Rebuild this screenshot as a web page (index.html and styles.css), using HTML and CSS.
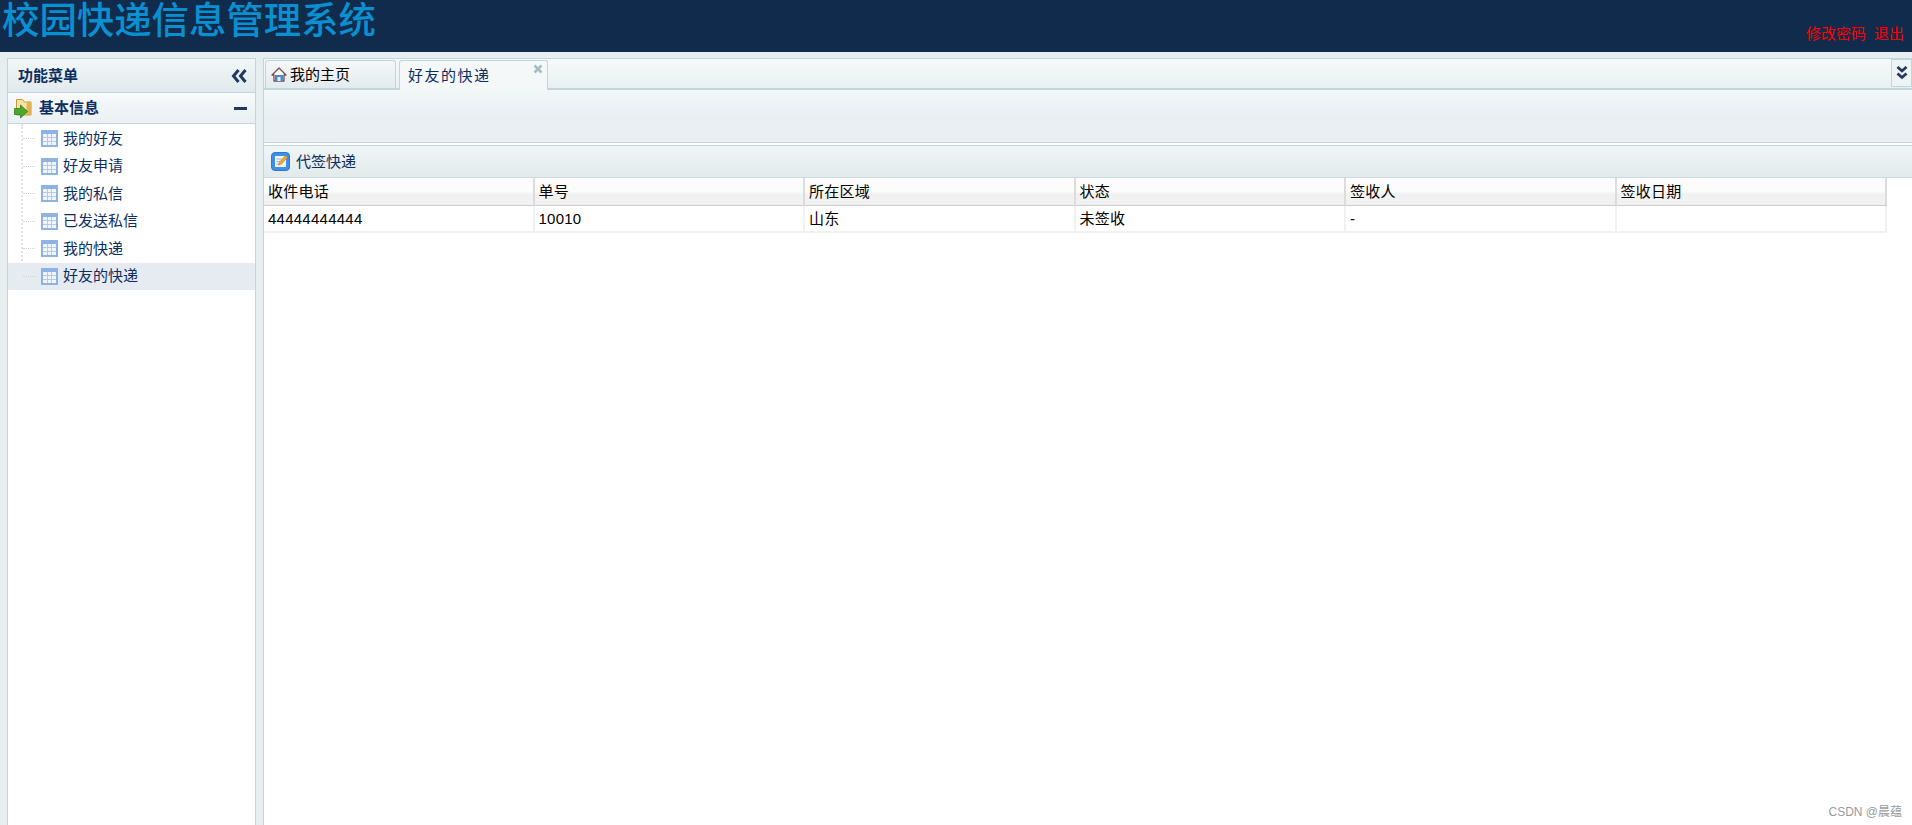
FILE: index.html
```html
<!DOCTYPE html>
<html lang="zh-CN">
<head>
<meta charset="utf-8">
<title>校园快递信息管理系统</title>
<link rel="stylesheet" href="styles.css">
</head>
<body>
<svg class="defs" width="0" height="0" aria-hidden="true">
  <symbol id="grid" viewBox="0 0 17 17">
    <rect x="0" y="0" width="17" height="17" fill="#8db3e6"/>
    <rect x="2" y="4" width="13" height="11" fill="#f2f6fc"/>
    <path d="M2 7.500h13M2 11.500h13M6.500 4v11M10.500 4v11" stroke="#b4cbe8" stroke-width="1"/>
  </symbol>
</svg>
<header class="top">
  <h1 class="brand">校园快递信息管理系统</h1>
  <div class="user-links"><a>修改密码</a><a>退出</a></div>
</header>
<main class="shell">
  <aside class="side">
    <div class="side-head">
      <span>功能菜单</span>
      <svg class="chev" width="16" height="14" viewBox="0 0 16 14"><path d="M7.500 1 2.500 7l5 6M14.500 1 9.500 7l5 6" fill="none" stroke="#20395f" stroke-width="3"/></svg>
    </div>
    <div class="acc-head">
      <svg class="folder" width="19" height="21" viewBox="0 0 19 21">
        <path d="M2.500 1.500h6l2 2.500h6.500v13H2.500z" fill="#f6e3a2" stroke="#c29a3c"/>
        <path d="M13 4h4v13h-5z" fill="#e4b350"/>
        <path d="M.5 10.500h6V7l7 6.500-7 6.500v-3.500h-6z" fill="#4aa92c" stroke="#2f7d1c" stroke-width=".8"/>
      </svg>
      <span class="acc-title">基本信息</span>
      <i class="minus"></i>
    </div>
    <ul class="tree">
      <li class="node"><svg class="ico"><use href="#grid"/></svg>我的好友</li>
      <li class="node"><svg class="ico"><use href="#grid"/></svg>好友申请</li>
      <li class="node"><svg class="ico"><use href="#grid"/></svg>我的私信</li>
      <li class="node"><svg class="ico"><use href="#grid"/></svg>已发送私信</li>
      <li class="node"><svg class="ico"><use href="#grid"/></svg>我的快递</li>
      <li class="node on"><svg class="ico"><use href="#grid"/></svg>好友的快递</li>
    </ul>
  </aside>
  <section class="work">
    <nav class="tabs">
      <div class="tab home">
        <svg width="16" height="15" viewBox="0 0 16 15">
          <path d="M8 1 1 8h2v6h10V8h2z" fill="#fff" stroke="#7b4a4a" stroke-width="1.300" stroke-linejoin="round"/>
          <path d="M4 8h8v6H4z" fill="#4d86c9"/><path d="M6.500 10h3v4h-3z" fill="#eaf2fb"/>
        </svg>
        <span>我的主页</span>
      </div>
      <div class="tab cur">
        <span>好友的快递</span>
        <svg class="close" width="10" height="10" viewBox="0 0 10 10"><path d="M1.500 1.500l7 7M8.500 1.500l-7 7" stroke="#a9bcc6" stroke-width="2.600"/></svg>
      </div>
      <div class="scroll">
        <svg width="12" height="14" viewBox="0 0 12 14"><path d="M1.500 1 6 5l4.500-4M1.500 7.500 6 11.500l4.500-4" fill="none" stroke="#20395f" stroke-width="2.800"/></svg>
      </div>
    </nav>
    <div class="search"></div>
    <div class="toolbar">
      <svg width="19" height="19" viewBox="0 0 19 19">
        <rect x=".5" y=".5" width="18" height="18" rx="3.500" fill="#3f8fe6" stroke="#2f79cf"/>
        <rect x="4" y="4" width="11" height="11" fill="#eef4fa"/>
        <path d="M5.500 7h5M5.500 9.500h4M5.500 12h3" stroke="#9fb2c6"/>
        <path d="M7.500 13l1-3 6-6.500 2 2-6 6.500z" fill="#f3a92f" stroke="#c9781a" stroke-width=".6"/>
      </svg>
      <span>代签快递</span>
    </div>
    <div class="grid-wrap">
      <table class="grid">
        <thead>
          <tr><th>收件电话</th><th>单号</th><th>所在区域</th><th>状态</th><th>签收人</th><th>签收日期</th></tr>
        </thead>
        <tbody>
          <tr><td>44444444444</td><td>10010</td><td>山东</td><td>未签收</td><td>-</td><td></td></tr>
        </tbody>
      </table>
    </div>
  </section>
</main>
<div class="mark">CSDN @晨蕴</div>
</body>
</html>
```
FILE: styles.css
```css
* { box-sizing: border-box; }
html, body { margin: 0; height: 100%; overflow: hidden; }
body {
  width: 1912px; height: 825px; position: relative;
  background: #e6eef0;
  font: 15px/1.2 "Liberation Sans", "Noto Sans CJK SC", sans-serif;
  color: #000;
  display: flex; flex-direction: column;
}
.defs { position: absolute; }
.top {
  height: 52px; flex: none; background: #102b4c;
  display: flex; justify-content: space-between; align-items: flex-start;
}
.brand {
  margin: 0; padding: 0 0 0 2px;
  font-size: 37.400px; line-height: 42px; font-weight: 500; color: #0a8fd0;
}
.user-links { margin-top: 25px; padding-right: 8px; display: flex; gap: 8px; color: #f00; line-height: 17px; }
.shell { flex: 1; min-height: 0; display: flex; padding: 6px 0 0 7px; gap: 7px; }
.side {
  width: 249px; flex: none; display: flex; flex-direction: column;
  border: 1px solid #c2d5dc; border-bottom: 0; background: #fff;
}
.side-head {
  height: 34px; flex: none; padding: 0 8px 0 10px;
  display: flex; align-items: center; justify-content: space-between;
  background: linear-gradient(#f2f6f7, #e2eaed);
  border-bottom: 1px solid #c2d5dc;
  color: #0e2d5f; font-weight: 700;
}
.acc-head {
  height: 31px; flex: none; padding: 0 8px 0 6px;
  display: flex; align-items: center;
  background: linear-gradient(#f8fafb, #e9eff2);
  border-bottom: 1px solid #c2d5dc;
  color: #0e2d5f; font-weight: 700;
}
.acc-title { margin-left: 6px; flex: 1; }
.minus { width: 13px; height: 3px; background: #20395f; }
.tree {
  list-style: none; margin: 0; padding: 1px 0 0; position: relative;
  color: #0e2d5f;
}
.tree::before {
  content: ""; position: absolute; left: 13px; top: 0; height: 152px;
  border-left: 2px dotted #e2e2e2;
}
.node {
  height: 27.500px; display: flex; align-items: center; padding-left: 33px; position: relative;
}
.node::before {
  content: ""; position: absolute; left: 15px; top: 13px; width: 12px;
  border-top: 1px dotted #d2d2d2;
}
.node.on { background: #e6ebf2; }
.ico { width: 17px; height: 17px; margin-right: 5px; flex: none; }
.work { flex: 1; min-width: 0; display: flex; flex-direction: column; background: #fff; border-left: 1px solid #c2d5dc; }
.tabs {
  height: 32px; flex: none; display: flex; align-items: flex-end; padding-left: 1px; position: relative;
  background: linear-gradient(#f6f9fa, #eaf0f2); border-top: 1px solid #c2d5dc; border-bottom: 2px solid #c2d5dc; gap: 3px;
}
.tab {
  height: 28px; display: flex; align-items: center; position: relative;
  border: 1px solid #c2d5dc; border-bottom: 0; border-radius: 3px 3px 0 0;
}
.tab.home { width: 131px; padding-left: 5px; gap: 3px; background: linear-gradient(#f4f7f8, #e3ebee); }
.tab.cur { width: 149px; height: 30px; margin-bottom: -2px; padding-left: 8px; background: #f5f8f9; color: #0e2d5f; letter-spacing: 1.500px; }
.close { position: absolute; right: 4px; top: 3px; }
.scroll {
  position: absolute; right: 0; top: 0; width: 21px; height: 28px;
  border: 1px solid #c2d5dc; background: #eef3f5;
  display: flex; align-items: center; justify-content: center;
}
.search { height: 53px; flex: none; background: linear-gradient(#f2f7f8, #e9eff3 50%); border-bottom: 1px solid #c2d5dc; }
.toolbar {
  height: 33px; flex: none; margin-top: 2px; padding-left: 7px; gap: 6px;
  display: flex; align-items: center;
  background: linear-gradient(#f0f6f6, #e2eaec);
  border-top: 1px solid #c2d5dc; border-bottom: 1px solid #ccd9dd;
  color: #0e2d5f;
}
.grid-wrap { flex: 1; background: #fff; }
.grid { width: 1623px; table-layout: fixed; border-collapse: separate; border-spacing: 0; }
.grid th, .grid td { padding: 0 3px 0 4px; text-align: left; font-weight: 400; border-right: 2px solid #f1f1f1; letter-spacing: .25px; }
.grid th {
  height: 28px; background: linear-gradient(#fcfcfc 50%, #f1f1f1 60%);
  border-right-color: #dcdcdc; border-bottom: 1px solid #ccc;
}
.grid td { height: 27px; padding-top: 1px; border-bottom: 2px solid #f1f1f1; }
.mark { position: absolute; right: 10px; bottom: 6px; font-size: 12px; line-height: 14px; color: #9a9a9a; }
```
